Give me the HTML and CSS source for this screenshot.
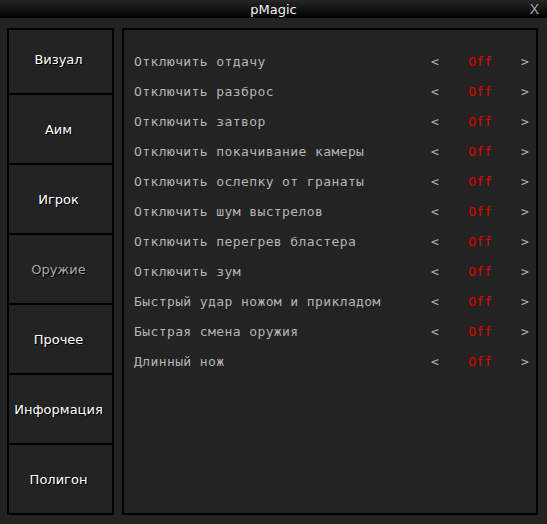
FILE: index.html
```html
<!DOCTYPE html>
<html lang="ru">
    <head>
        <meta charset="UTF-8">
        <title>pMagic</title>
        <link rel="stylesheet" href="styles.css">
    </head>
    <body>
        <header class="titlebar">
            <span class="title">pMagic</span>
            <span class="close">X</span>
        </header>

        <div class="window">
            <nav class="sidebar">
                <div class="tab first">Визуал</div>
                <div class="tab">Аим</div>
                <div class="tab">Игрок</div>
                <div class="tab active">Оружие</div>
                <div class="tab">Прочее</div>
                <div class="tab">Информация</div>
                <div class="tab">Полигон</div>
            </nav>

            <main class="panel">
                <div class="row"><span class="label">Отключить отдачу</span><span class="arrow">&lt;</span><span class="value">Off</span><span class="arrow">&gt;</span></div>
                <div class="row"><span class="label">Отключить разброс</span><span class="arrow">&lt;</span><span class="value">Off</span><span class="arrow">&gt;</span></div>
                <div class="row"><span class="label">Отключить затвор</span><span class="arrow">&lt;</span><span class="value">Off</span><span class="arrow">&gt;</span></div>
                <div class="row"><span class="label">Отключить покачивание камеры</span><span class="arrow">&lt;</span><span class="value">Off</span><span class="arrow">&gt;</span></div>
                <div class="row"><span class="label">Отключить ослепку от гранаты</span><span class="arrow">&lt;</span><span class="value">Off</span><span class="arrow">&gt;</span></div>
                <div class="row"><span class="label">Отключить шум выстрелов</span><span class="arrow">&lt;</span><span class="value">Off</span><span class="arrow">&gt;</span></div>
                <div class="row"><span class="label">Отключить перегрев бластера</span><span class="arrow">&lt;</span><span class="value">Off</span><span class="arrow">&gt;</span></div>
                <div class="row"><span class="label">Отключить зум</span><span class="arrow">&lt;</span><span class="value">Off</span><span class="arrow">&gt;</span></div>
                <div class="row"><span class="label">Быстрый удар ножом и прикладом</span><span class="arrow">&lt;</span><span class="value">Off</span><span class="arrow">&gt;</span></div>
                <div class="row"><span class="label">Быстрая смена оружия</span><span class="arrow">&lt;</span><span class="value">Off</span><span class="arrow">&gt;</span></div>
                <div class="row"><span class="label">Длинный нож</span><span class="arrow">&lt;</span><span class="value">Off</span><span class="arrow">&gt;</span></div>
            </main>
        </div>
    </body>
</html>
```

FILE: styles.css
```css
* {
    box-sizing: border-box;
}

body {
    margin: 0;
    width: 547px;
    height: 524px;
    background-color: #232323;
    font-family: 'DejaVu Sans', sans-serif;
    overflow: hidden;
}

.titlebar {
    height: 18px;
    background: linear-gradient(#262626, #000);
    display: flex;
    justify-content: center;
    align-items: center;
    position: relative;
}

.title {
    color: #f2f2f2;
    font-size: 13px;
}

.close {
    position: absolute;
    right: 8px;
    top: 1px;
    color: #a8a8a8;
    font-size: 14px;
    font-family: 'Liberation Sans', sans-serif;
}

.window {
    display: flex;
    gap: 8px;
    padding: 10px 9px 9px 7px;
}

.sidebar {
    width: 107px;
    height: 487px;
    border: 2px solid #000;
    display: flex;
    flex-direction: column;
}

.tab {
    height: 70px;
    border-top: 2px solid #000;
    display: flex;
    justify-content: center;
    align-items: center;
    padding-right: 4px;
    color: #fff;
    font-size: 13px;
    text-shadow: 1px 1px 0 #000;
}

.tab.first {
    height: 63px;
    border-top: none;
    padding-bottom: 5px;
}

.tab.active {
    color: #a9a9a9;
}

.panel {
    flex: 1;
    height: 487px;
    border: 2px solid #000;
    padding: 16px 1px 0 10px;
}

.row {
    display: grid;
    grid-template-columns: 1fr 20px 40px 20px;
    column-gap: 15px;
    height: 30px;
    align-items: center;
    font-family: 'DejaVu Sans Mono', monospace;
    font-size: 13px;
    color: #b5b5b5;
    letter-spacing: 0.4px;
}

.arrow {
    text-align: center;
    color: #b0b0b0;
}

.value {
    text-align: center;
    color: #e00000;
    letter-spacing: 0;
}
```
